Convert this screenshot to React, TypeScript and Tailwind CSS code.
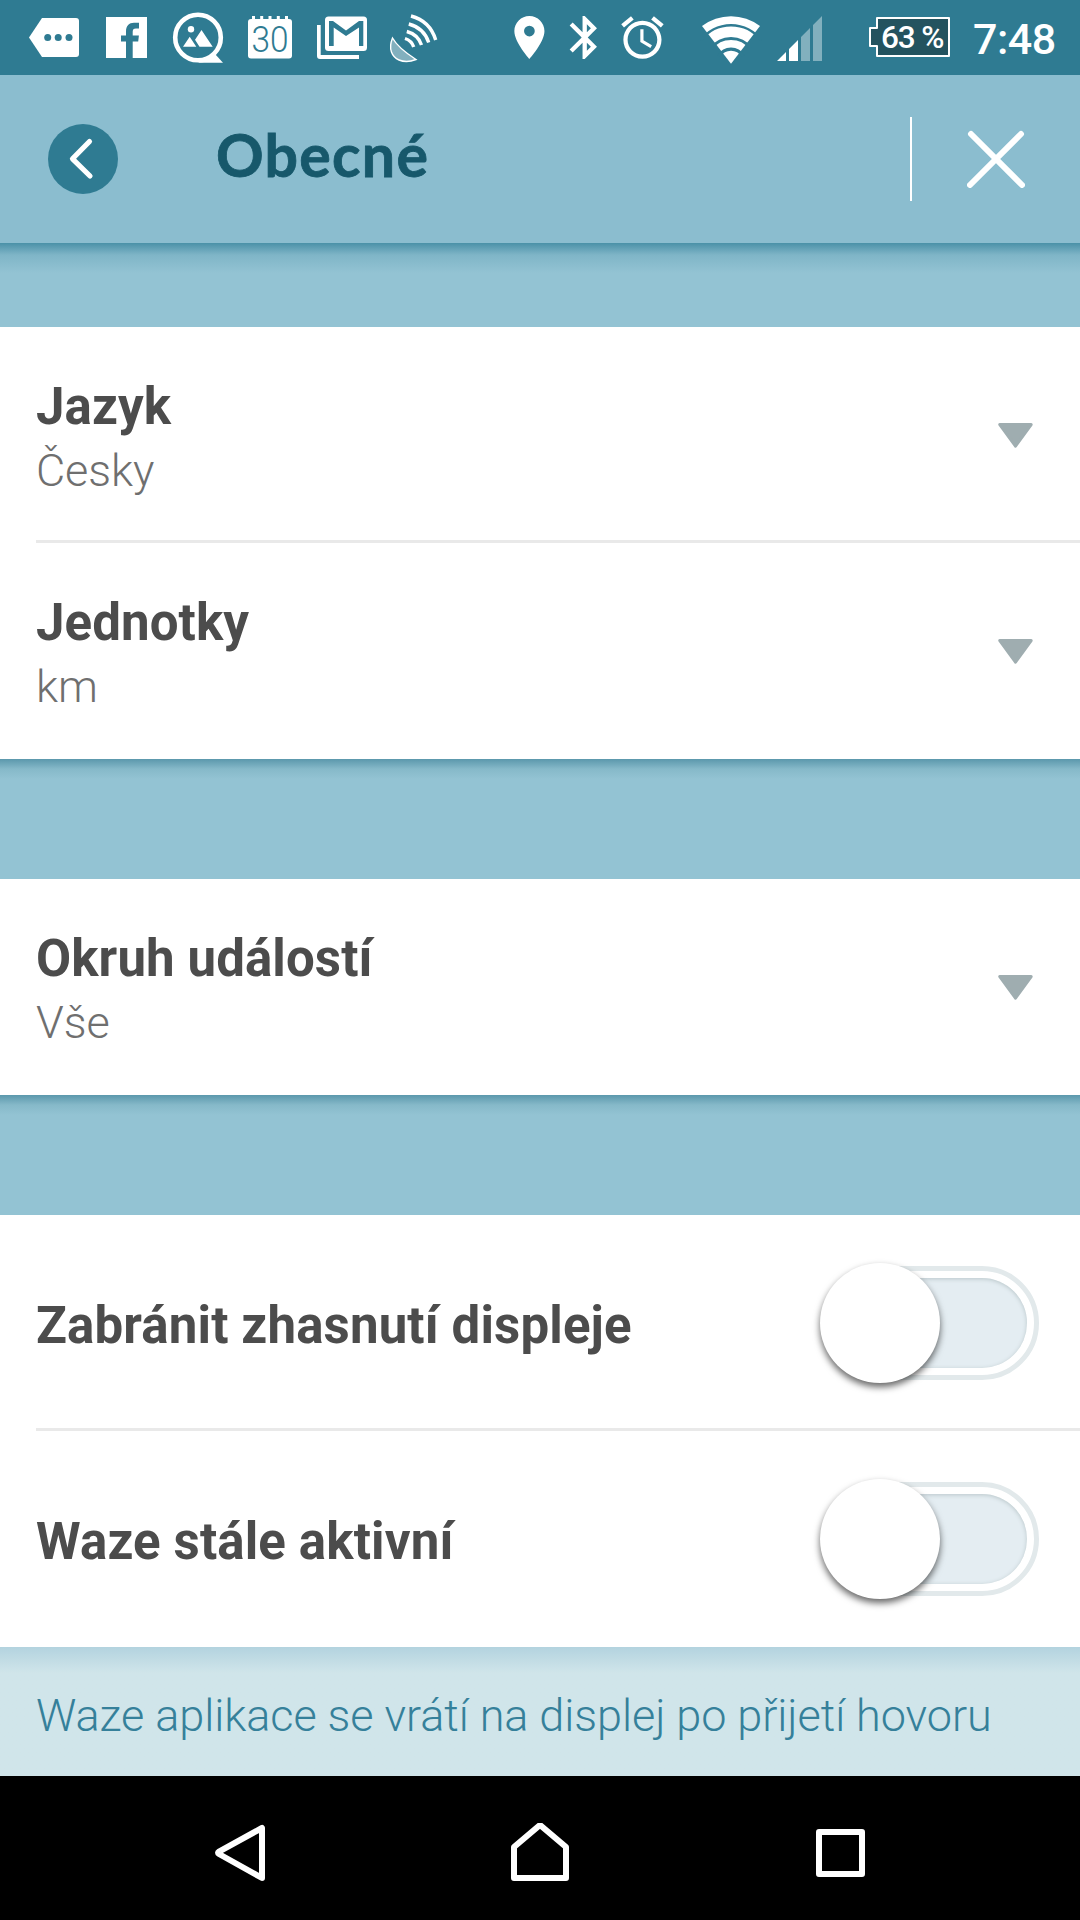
import type { ReactNode } from "react";

type StatusIconProps = {
    x: number;
    width: number;
    className?: string;
    children: ReactNode;
};

// All status glyphs share the bar's own coordinates, x is where the glyph starts
function StatusIcon({ x, width, className, children }: StatusIconProps) {
    return (
        <svg
            width={width}
            height={75}
            viewBox={`${x} 0 ${width} 75`}
            fill="#fff"
            aria-hidden="true"
            className={`shrink-0 overflow-visible ${className ?? ""}`}
        >
            {children}
        </svg>
    );
}

function StatusBar() {
    return (
        <div className="flex h-[75px] shrink-0 bg-[#2f7b92] pl-[29px]">
            {/* Messages */}
            <StatusIcon x={29} width={50}>
                <path d="M42 18H76Q79 18 79 21V54Q79 57 76 57H42L29 37.5Z" />
                <g fill="#2f7b92">
                    <circle cx="47.7" cy="37.5" r="3.5" />
                    <circle cx="58.2" cy="37.5" r="3.5" />
                    <circle cx="69" cy="37.5" r="3.5" />
                </g>
            </StatusIcon>
            {/* Facebook */}
            <StatusIcon x={106} width={41} className="ml-[27px]">
                <path d="M106 17H147V58H106Z" />
                <path
                    fill="#2f7b92"
                    d="M126 58V41.5H121V35.5H126V31.5C126 25.5 129 22.7 134 22.7H139V28.5H136C133.5 28.5 132.7 29.5 132.7 32V35.5H138.9L138.2 41.5H132.7V58Z"
                />
            </StatusIcon>
            {/* Gallery */}
            <StatusIcon x={173} width={50} className="ml-[26px]">
                <circle cx="198" cy="37.5" r="22.8" fill="none" stroke="#fff" strokeWidth="4.6" />
                <path d="M198 62.8H223L215 54Z" />
                <circle cx="191" cy="29.3" r="3.2" />
                <path d="M183 46.8L189.7 36.8L196.3 46.8ZM195 39.8L201.5 30L212.7 46.8H199.5Z" />
            </StatusIcon>
            {/* Calendar */}
            <StatusIcon x={248} width={44} className="ml-[25px]">
                <rect x="248" y="19" width="44" height="39.5" rx="3" />
                <path d="M252 16h3v5h-3zM260.2 16h3v5h-3zM268.5 16h3v5h-3zM276.8 16h3v5h-3zM285 16h3v5h-3z" />
                <text
                    x="251.5"
                    y="52"
                    fill="#2f7b92"
                    textLength="37"
                    lengthAdjust="spacingAndGlyphs"
                    className="font-['Roboto'] text-[36px] font-light"
                >
                    30
                </text>
            </StatusIcon>
            {/* Mail */}
            <StatusIcon x={317} width={50} className="ml-[25px]">
                <path d="M317 25H320.7V55H359V59H320Q317 59 317 56Z" />
                <rect x="325" y="16.5" width="42" height="34.5" rx="3.5" />
                <path
                    fill="#2f7b92"
                    d="M329 46V21H333L346 30.5L359 21H363.3V46H359V27.5L346 36L333.7 27.5V46Z"
                />
            </StatusIcon>
            {/* Satellite */}
            <StatusIcon x={390} width={48} className="ml-[23px]">
                <path
                    d="M392.5 38C388 49 392 57 399 60C405 62.5 411 61.5 416 59.5C409 55 397 46 392.5 38Z"
                    fill="#82b0be"
                    stroke="#fff"
                    strokeWidth="1.4"
                />
                <g fill="none" stroke="#fff" strokeWidth="3.4">
                    <path d="M411 16Q430 21 435.7 40" />
                    <path d="M408.8 24Q424 28 428.7 42.5" />
                    <path d="M406.8 31.5Q418 34.5 421.5 45" />
                    <path d="M405 38.5Q411.5 40.5 413.7 47" />
                </g>
            </StatusIcon>
            {/* Location */}
            <StatusIcon x={514} width={30} className="ml-[76px]">
                <path
                    transform="translate(503.6 11.7) scale(2.15)"
                    d="M12 2C8.13 2 5 5.13 5 9c0 5.25 7 13 7 13s7-7.75 7-13c0-3.87-3.13-7-7-7zm0 9.5a2.5 2.5 0 1 1 0-5 2.5 2.5 0 0 1 0 5z"
                />
            </StatusIcon>
            {/* Bluetooth */}
            <StatusIcon x={570} width={27} className="ml-[26px]">
                <path
                    transform="translate(558.9 11.7) scale(2.15)"
                    d="M17.71 7.71L12 2h-1v7.59L6.41 5 5 6.41 10.59 12 5 17.59 6.41 19 11 14.41V22h1l5.71-5.71-4.3-4.29 4.3-4.29zM13 5.83l1.88 1.88L13 9.59V5.83zm1.88 10.46L13 18.17v-3.76l1.88 1.88z"
                />
            </StatusIcon>
            {/* Alarm */}
            <StatusIcon x={622} width={42} className="ml-[25px]">
                <path
                    transform="translate(617 12.2) scale(2.12)"
                    d="M22 5.72l-4.6-3.86-1.29 1.53 4.6 3.86L22 5.72zM7.88 3.39L6.6 1.86 2 5.71l1.29 1.53 4.59-3.85zM12.5 8H11v6l4.75 2.85.75-1.23-4-2.37V8zM12 4c-4.97 0-9 4.03-9 9s4.02 9 9 9c4.97 0 9-4.03 9-9s-4.03-9-9-9zm0 16c-3.87 0-7-3.13-7-7s3.13-7 7-7 7 3.13 7 7-3.13 7-7 7z"
                />
            </StatusIcon>
            {/* Wi-Fi */}
            <StatusIcon x={702} width={58} className="ml-[38px]">
                <path d="M731 63.7L702 26A47.6 47.6 0 0 1 760 26Z" />
                <g fill="none" stroke="#2f7b92">
                    <path d="M701 40.2A37.6 37.6 0 0 1 761 40.2" strokeWidth="2.5" />
                    <path d="M711 48.5A25 25 0 0 1 751 48.5" strokeWidth="2.8" />
                    <path d="M719 56A14 14 0 0 1 743 56" strokeWidth="3.2" />
                </g>
            </StatusIcon>
            {/* Signal */}
            <StatusIcon x={777} width={45} className="ml-[17px]">
                <path d="M777 61L786 52V61ZM789 49L798 40V61H789Z" />
                <path fill="#82b0be" d="M801 37L810 28V61H801ZM813 25L822 16V61H813Z" />
            </StatusIcon>
            {/* Battery */}
            <StatusIcon x={869} width={81} className="ml-[47px]">
                <path
                    d="M877 18H949V56H877V46H870V28H877Z"
                    fill="#24535f"
                    stroke="#fff"
                    strokeWidth="2"
                    strokeLinejoin="round"
                />
                <text
                    x="881"
                    y="48"
                    textLength="63.5"
                    className="font-['Roboto'] text-[31.5px] font-medium"
                >
                    63 %
                </text>
            </StatusIcon>
            <span className="ml-[23px] font-['Roboto'] text-[43px] leading-[79px] font-medium tracking-[-0.5px] text-white">
                7:48
            </span>
        </div>
    );
}

function Header() {
    return (
        <header className="flex h-[168px] shrink-0 items-center bg-[#8bbdcf] pl-12">
            <button type="button" aria-label="Zpět" className="size-[70px] rounded-full bg-[#2f7b92]">
                <svg viewBox="0 0 70 70" fill="none" stroke="#fff" strokeWidth="5.2" strokeLinecap="round" strokeLinejoin="round">
                    <path d="M41.5 17.5L24.5 34.8L42 52" />
                </svg>
            </button>
            <h1 className="ml-[98px] flex-1 pb-[9px] font-['Lato'] text-[59px] leading-[70px] font-bold tracking-[1.3px] text-[#17586b] [-webkit-text-stroke:0.8px_#17586b]">
                Obecné
            </h1>
            <div className="h-[84px] w-0.5 bg-white" />
            <button type="button" aria-label="Zavřít" className="mr-[55px] ml-[55px]">
                <svg className="h-[58px] w-[58px]" viewBox="967 130 58 58" fill="none" stroke="#fff" strokeWidth="6" strokeLinecap="round">
                    <path d="M971 134L1022 185M1021 134L970 185" />
                </svg>
            </button>
        </header>
    );
}

function Divider() {
    return <div className="-mt-[3px] ml-9 h-[3px] bg-[#e9e9e9]" />;
}

function SelectRow({ title, value }: { title: string; value: string }) {
    return (
        <div className="flex h-[216px] items-center justify-between pr-[47px] pl-9">
            <div className="pt-2">
                <div className="text-[51px] leading-[64px] font-bold tracking-[0.1px] text-[#4c4c4c]">{title}</div>
                <div className="text-[45px] leading-[64px] font-light tracking-[-0.1px] text-[#6f6f6f]">{value}</div>
            </div>
            <svg className="h-[25px] w-[35px]" viewBox="0 0 35 25" fill="#9fadb0" stroke="#9fadb0" strokeWidth="3" strokeLinejoin="round">
                <path d="M1.8 1.5H33.2L17.5 23.2Z" />
            </svg>
        </div>
    );
}

function ToggleRow({ title }: { title: string }) {
    return (
        <div className="flex h-[216px] items-center justify-between pr-[41px] pl-9">
            <div className="pt-[5px] text-[51px] leading-[64px] font-bold tracking-[0.14px] text-[#4c4c4c]">{title}</div>
            <div role="switch" aria-checked="false" aria-label={title} className="relative flex h-[120px] w-[219px] items-center">
                <div className="ml-1 h-[114px] flex-1 rounded-full border-[5px] border-[#e2e9eb] p-[7px]">
                    <div className="h-full rounded-full bg-[#e4edf2] shadow-[inset_0_1px_4px_#b9c6c9]" />
                </div>
                <div className="absolute top-0 left-0 size-[120px] rounded-full bg-white shadow-[0_4px_7px_rgba(0,0,0,0.6)]" />
            </div>
        </div>
    );
}

function NavigationBar() {
    return (
        <nav className="flex h-36 shrink-0 items-center justify-between bg-black pt-2.5 pr-[214px] pl-[214px]">
            <svg className="h-[60px] w-[52px]" viewBox="214 1823 52 60" fill="none" stroke="#fff" strokeWidth="6" strokeLinejoin="round">
                <path d="M262 1828V1878L219 1854Q217 1852.8 219 1851.6Z" />
            </svg>
            <svg className="h-[60px] w-[60px]" viewBox="511 1823 60 60" fill="none" stroke="#fff" strokeWidth="6" strokeLinejoin="round">
                <path d="M514 1878V1847L540 1825L566 1847V1878Z" />
            </svg>
            <svg className="h-[50px] w-[50px]" viewBox="816 1828 50 50" fill="none" stroke="#fff" strokeWidth="6" strokeLinejoin="round">
                <path d="M819 1832H862V1874H819Z" />
            </svg>
        </nav>
    );
}

export default function App() {
    return (
        <div className="flex h-[1920px] w-[1080px] flex-col overflow-hidden bg-[#93c3d3] font-['Roboto',sans-serif]">
            <StatusBar />
            <Header />
            <div className="h-[84px] shrink-0">
                <div className="h-[30px] bg-linear-to-b from-[#4a91a8] via-[#7fb5c7] via-40% to-[#93c3d3]" />
            </div>

            <section className="shrink-0 bg-white">
                <SelectRow title="Jazyk" value="Česky" />
                <Divider />
                <SelectRow title="Jednotky" value="km" />
            </section>
            <div className="h-[120px] shrink-0">
                <div className="h-5 bg-linear-to-b from-[#5b98ac] via-[#86b9c9] via-50% to-[#93c3d3]" />
            </div>

            <section className="shrink-0 bg-white">
                <SelectRow title="Okruh událostí" value="Vše" />
            </section>
            <div className="h-[120px] shrink-0">
                <div className="h-5 bg-linear-to-b from-[#5b98ac] via-[#86b9c9] via-50% to-[#93c3d3]" />
            </div>

            <section className="shrink-0 bg-white">
                <ToggleRow title="Zabránit zhasnutí displeje" />
                <Divider />
                <ToggleRow title="Waze stále aktivní" />
            </section>

            <div className="h-[129px] shrink-0 bg-[#d0e5ea] bg-linear-to-b from-[#b3d3df] to-[#d0e5ea] to-[26px] pt-10 pl-9 text-[45px] leading-[58px] font-light tracking-[-0.06px] whitespace-nowrap text-[#35809a]">
                Waze aplikace se vrátí na displej po přijetí hovoru
            </div>
            <NavigationBar />
        </div>
    );
}
